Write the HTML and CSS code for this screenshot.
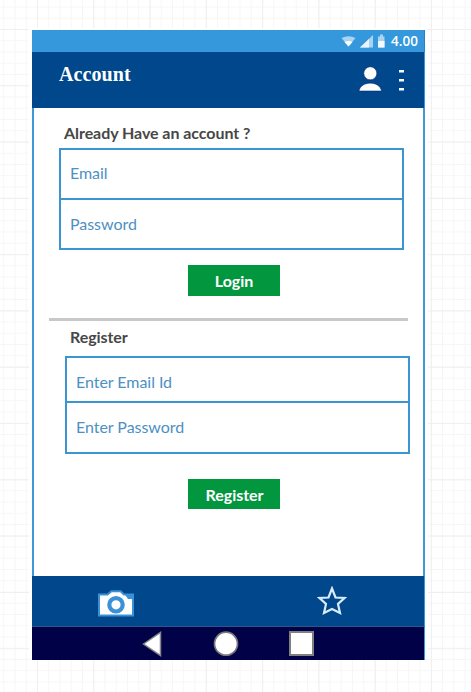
FILE: index.html
```html
<!DOCTYPE html>
<html lang="en">
<head>
<meta charset="utf-8">
<title>Account</title>
<link rel="stylesheet" href="styles.css">
</head>
<body>
<main class="phone">
  <div class="status">
    <svg class="status-icons" width="46" height="16" viewBox="0 0 46 16">
      <path d="M1.500 5Q8.500 1.500 15.500 5L8.500 13.500Z" fill="#a9d4f1"/>
      <path d="M4.500 9Q8.500 7 12.500 9L8.500 13.500Z" fill="#fff"/>
      <path d="M20 14.500L33 2V14.500Z" fill="#a9d4f1"/>
      <path d="M20 14.500L29 6V14.500Z" fill="#e9f5fc"/>
      <path d="M38 3.500h2V1.500h3v2h1.500v11H38Z" fill="#a9d4f1"/>
      <path d="M38 8h6.500v6.500H38Z" fill="#f4faff"/>
    </svg>
    <span class="clock">4.00</span>
  </div>
  <header class="header">
    <h1 class="title">Account</h1>
    <svg class="user" width="26" height="28" viewBox="0 0 26 28" fill="#fff" stroke="#06307c" stroke-width=".6">
      <circle cx="13.300" cy="8.300" r="6.500"/>
      <path d="M2 26C3.500 15.500 23 15.500 24.500 26Z"/>
    </svg>
    <span class="more"><i></i><i></i><i></i></span>
  </header>
  <section class="content">
    <h2 class="label login-label">Already Have an account ?</h2>
    <div class="fields login-fields">
      <div class="field">Email</div>
      <div class="field">Password</div>
    </div>
    <div class="button login-button">Login</div>
    <div class="rule"></div>
    <h2 class="label register-label">Register</h2>
    <div class="fields register-fields">
      <div class="field">Enter Email Id</div>
      <div class="field">Enter Password</div>
    </div>
    <div class="button register-button">Register</div>
  </section>
  <nav class="tabs">
    <svg class="camera" width="36" height="27" viewBox="0 0 36 27">
      <path d="M1 4.500H9.500L13.500 1.200H22.500L26 4.500H35V25.500H1Z" fill="#fff" stroke="#3b91d6" stroke-width="2"/>
      <path d="M26.500 4H35V9H30Z" fill="#3b91d6"/>
      <circle cx="18" cy="14.800" r="6.700" fill="#fff" stroke="#3b91d6" stroke-width="4.200"/>
    </svg>
    <svg class="star" width="30" height="30" viewBox="0 0 30 30">
      <path d="M15 2.500L18.500 11.500L27.500 12L21 18L23 27L15 23L7 27L9 18L2.500 12L11.500 11.500Z" fill="none" stroke="#d9ecf9" stroke-width="2.200"/>
    </svg>
  </nav>
  <div class="system">
    <svg width="20" height="26" viewBox="0 0 20 26"><path d="M1.500 13L18.500 1.500V24.500Z" fill="#fff" stroke="#85858b" stroke-width="1.500"/></svg>
    <svg width="26" height="26" viewBox="0 0 26 26"><circle cx="13" cy="12.700" r="11.500" fill="#fff" stroke="#77777f" stroke-width="1.700"/></svg>
    <svg width="25" height="25" viewBox="0 0 25 25"><path d="M1 1H24V24H1Z" fill="#fff" stroke="#808080" stroke-width="2"/></svg>
  </div>
</main>
</body>
</html>
```
FILE: styles.css
```css
* { box-sizing: border-box; }
body {
  margin: 0;
  height: 692px;
  overflow: hidden;
  padding: 30px 0 0 32px;
  font-family: Lato, sans-serif;
  background-color: #fff;
  background-image:
    linear-gradient(90deg, #efefef 1px, transparent 1px),
    linear-gradient(#efefef 1px, transparent 1px),
    linear-gradient(90deg, #f6f6f6 1px, transparent 1px),
    linear-gradient(#f6f6f6 1px, transparent 1px);
  background-size: 56.3px 56.3px, 56.3px 56.3px, 11.26px 11.26px, 11.26px 11.26px;
  background-position: 37px 29px, 37px 29px, 37px 29px, 37px 29px;
}
svg { display: block; flex: none; }
.phone {
  width: 393px;
  height: 630px;
  background: #fff;
  box-shadow: -3px -2px 0 #fff, 3px -2px 0 #fff;
  display: flex;
  flex-direction: column;
}
.status {
  height: 22px;
  background: #3598dc;
  display: flex;
  align-items: center;
  padding-left: 308px;
  border-right: 1px solid #2a80c6;
}
.clock {
  margin-left: 5px;
  font-size: 13.5px;
  font-weight: 600;
  line-height: 22px;
  color: #fff;
  white-space: nowrap;
  font-family: "Open Sans", sans-serif;
}
.header {
  height: 56px;
  background: #00478c;
  display: flex;
  border-right: 1px solid #3598dc;
}
.title {
  margin: 10px 0 0 27px;
  width: 298px;
  font: bold 20px/24px "Liberation Serif", serif;
  letter-spacing: .1px;
  color: #fff;
}
.user { margin-top: 13px; }
.more {
  margin: 18px 0 0 16px;
  display: flex;
  flex-direction: column;
  gap: 6px;
}
.more i {
  width: 5px;
  height: 3px;
  background: #fff;
  border-bottom: 1px solid #6ba7dc;
}
.content {
  height: 468px;
  border: solid #3f98d8;
  border-width: 0 2px;
}
.label {
  font-size: 16px;
  line-height: 20px;
  font-weight: 700;
  letter-spacing: -.06px;
  color: #474747;
  margin: 0;
  white-space: nowrap;
}
.login-label { margin: 15px 0 0 30px; }
.register-label { margin: 6px 0 0 36px; }
.fields {
  width: 345px;
  border: 2px solid #3b95d3;
  color: #4d90c4;
  font-size: 16px;
  letter-spacing: -.04px;
}
.field { padding-left: 9px; }
.field + .field { border-top: 2px solid #3b95d3; }
.login-fields { margin: 5px 0 0 25px; height: 102px; }
.login-fields .field { height: 48px; line-height: 46px; }
.login-fields .field + .field { height: 50px; line-height: 47px; }
.register-fields { margin: 9px 0 0 31px; height: 98px; }
.register-fields .field { height: 43px; line-height: 47px; }
.register-fields .field + .field { height: 51px; line-height: 48px; }
.button {
  width: 92px;
  height: 31px;
  background: #02963f;
  color: #fff;
  font-size: 16px;
  line-height: 31px;
  font-weight: 700;
  letter-spacing: -.05px;
  text-align: center;
}
.login-button { margin: 15px 0 0 154px; }
.register-button { margin: 25px 0 0 154px; height: 30px; padding-left: 1px; }
.rule {
  width: 359px;
  height: 3px;
  margin: 22px 0 0 15px;
  background: #c8c8c8;
}
.tabs {
  height: 51px;
  background: #00478c;
  border-bottom: 1px solid #315489;
  border-right: 1px solid #3598dc;
  display: flex;
}
.camera { margin: 14px 0 0 66px; }
.star { margin: 10px 0 0 183px; }
.system {
  height: 33px;
  background: #000147;
  border-right: 1px solid #3598dc;
  display: flex;
  align-items: center;
  padding-left: 110px;
}
.system svg:nth-child(2) { margin-left: 51px; }
.system svg:nth-child(3) { margin-left: 50px; }
```
